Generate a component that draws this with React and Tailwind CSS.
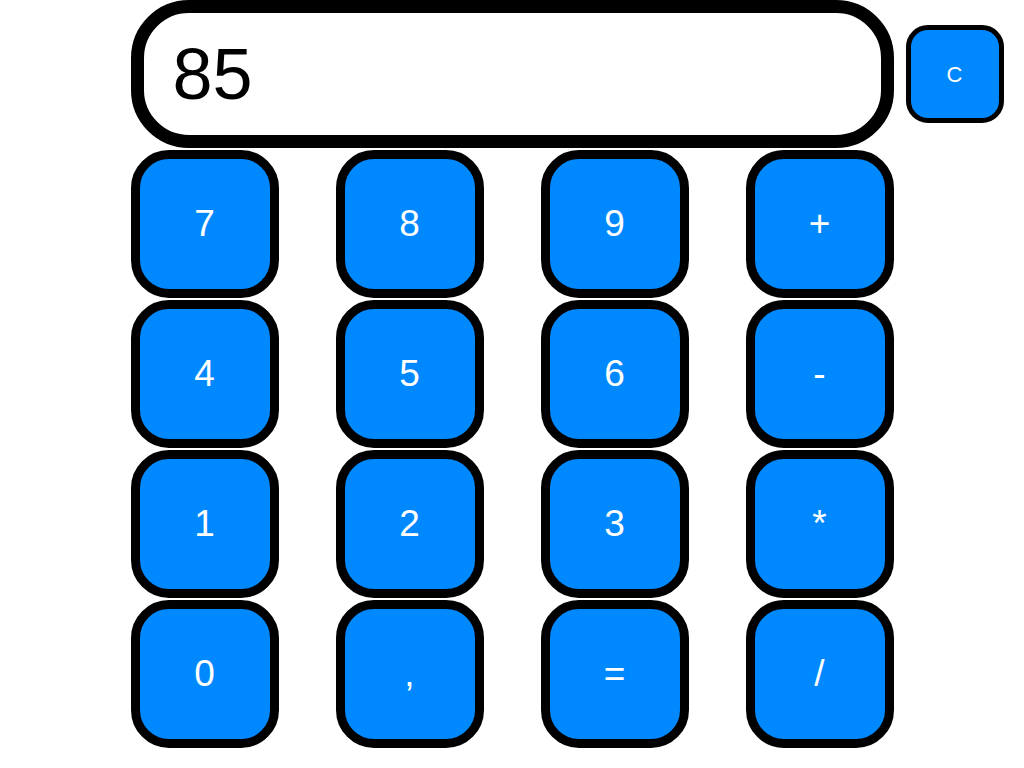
import React, { useState } from 'react';

const keys = ['7', '8', '9', '+', '4', '5', '6', '-', '1', '2', '3', '*', '0', ',', '=', '/'];

const App = () => {
    const [display, setDisplay] = useState('85');

    const press = (k) => {
        if (k === '=') {
            try {
                // eslint-disable-next-line no-new-func
                setDisplay(String(Function(`return (${display.replace(',', '.')})`)()));
            } catch (e) {
                setDisplay('Error');
            }
            return;
        }
        setDisplay((prev) => prev + k);
    };

    return (
        <div className="flex justify-center bg-white min-h-screen" style={{ fontFamily: '"Liberation Sans", Arial, sans-serif' }}>
            <div className="flex flex-col w-[763px] gap-[2px]">
                <div className="flex items-center gap-3">
                    <div className="flex items-center w-[763px] h-[148px] shrink-0 border-[13px] border-black rounded-[58px] bg-white pl-[29px]">
                        <span className="text-[72px] leading-none text-black">{display}</span>
                    </div>
                    <button
                        onClick={() => setDisplay('')}
                        className="shrink-0 w-[98px] h-[98px] mr-[-110px] border-[5px] border-black rounded-[22px] bg-[#0088ff] text-white text-[22px] flex items-center justify-center"
                    >
                        C
                    </button>
                </div>
                <div className="grid grid-cols-4 gap-x-[57px] gap-y-[2px]">
                    {keys.map((k) => (
                        <button
                            key={k}
                            onClick={() => press(k)}
                            className="w-[148px] h-[148px] border-[9px] border-black rounded-[38px] bg-[#0088ff] text-white text-[37px] flex items-center justify-center"
                        >
                            {k}
                        </button>
                    ))}
                </div>
            </div>
        </div>
    );
};

export default App;
